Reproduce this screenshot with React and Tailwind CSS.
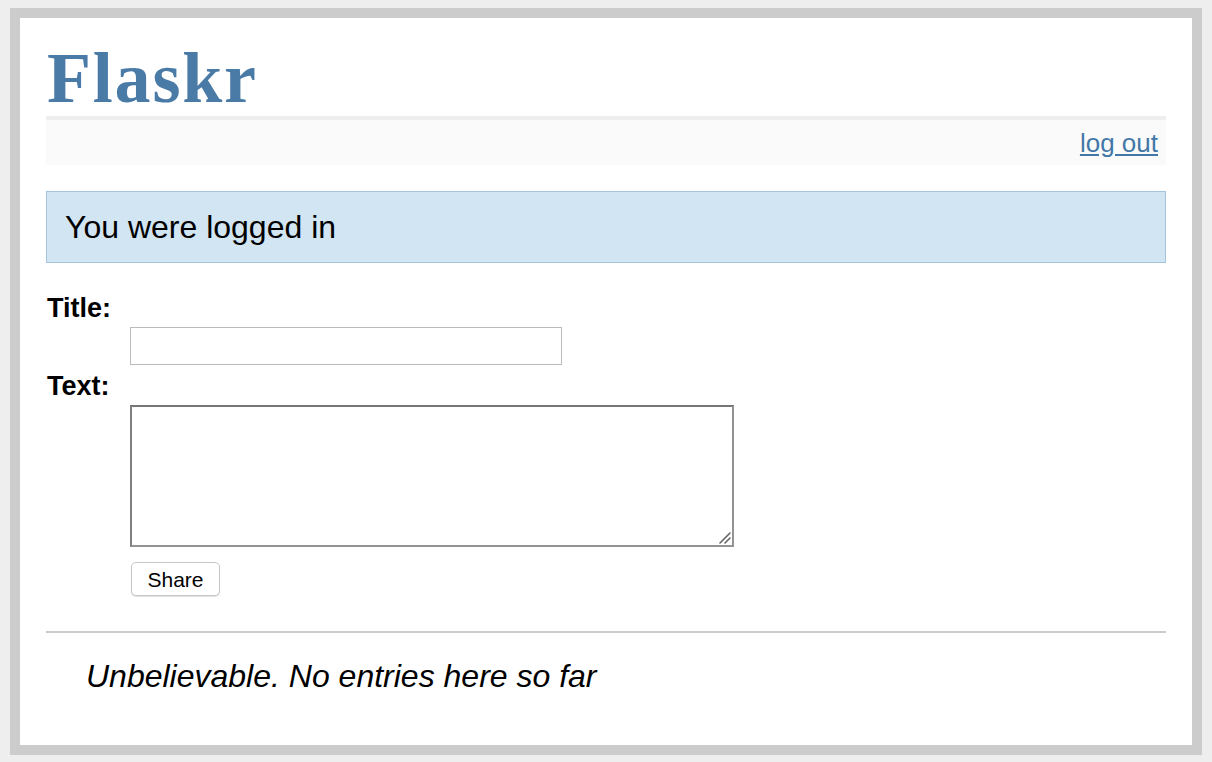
export default function App() {
  return (
    <div className="min-h-screen bg-[#eeeeee] pt-[8px] px-[10px] pb-[7px] font-['Liberation_Sans',Arial,sans-serif] text-black">
      <div className="h-[747px] border-[10px] border-[#cccccc] bg-white px-[26px]">
        <h1 className="mt-[24px] h-[72px] pl-px font-['Liberation_Serif',Georgia,serif] text-[72px] font-bold leading-[72px] tracking-[1.8px] text-[#4a7aa6]">
          Flaskr
        </h1>
        <div className="mt-[2px] flex h-[49px] items-center justify-end border-t-4 border-[#eeeeee] bg-[#fafafa] pr-[8px] pt-[2px]">
          <a href="#" className="text-[26px] text-[#4278a8] underline">log out</a>
        </div>

        <div className="mt-[26px] flex h-[72px] items-center border border-[#a6c4de] bg-[#d2e5f3] pl-[18px] text-[32px]">
          You were logged in
        </div>

        <form className="border-b-2 border-[#cccccc] pb-[35px]" onSubmit={(e) => e.preventDefault()}>
          <div className="mt-[30px] h-[30px] pl-px text-[27px] font-bold leading-[30px]">Title:</div>
          <input type="text" className="ml-[84px] mt-[4px] block h-[38px] w-[432px] border border-[#bbbbbb] bg-white px-1 text-[20px] outline-none" />
          <div className="mt-[6px] h-[30px] pl-px text-[27px] font-bold leading-[30px]">Text:</div>
          <div className="relative ml-[84px] mt-[4px] h-[142px] w-[604px]">
            <textarea className="block h-full w-full resize-none border-2 border-t-[#767676] border-l-[#7f7f7f] border-r-[#939393] border-b-[#939393] bg-white p-1 text-[20px] outline-none" />
            <svg className="pointer-events-none absolute bottom-[2px] right-[2px]" width="14" height="14" viewBox="0 0 14 14">
              <path d="M2 12 L12 2 M7 12 L12 7" stroke="#666666" strokeWidth="1.6" strokeLinecap="round" />
            </svg>
          </div>
          <button type="submit" className="ml-[85px] mt-[15px] block h-[34px] w-[89px] rounded-[5px] border border-[#c6c6c6] bg-white text-[21px] leading-none shadow-[0_1px_1px_rgba(0,0,0,0.12)]">
            Share
          </button>
        </form>

        <ul>
          <li className="ml-[40px] mt-[25px] h-[36px] text-[32px] italic leading-[36px]">
            Unbelievable. No entries here so far
          </li>
        </ul>
      </div>
    </div>
  );
}
